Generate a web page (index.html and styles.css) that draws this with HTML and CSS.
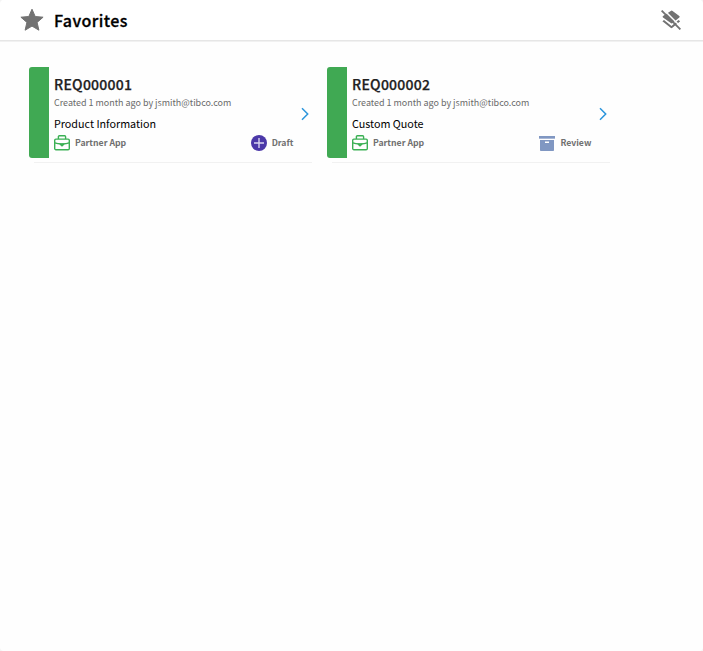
FILE: index.html
```html
<!DOCTYPE html>
<html lang="en">
<head>
<meta charset="utf-8">
<title>Favorites</title>
<link rel="stylesheet" href="styles.css">
</head>
<body>
<svg class="defs" aria-hidden="true">
  <symbol id="case" viewBox="0 0 16 16">
    <g fill="none" stroke="#3bb054" stroke-width="1.400" stroke-linejoin="round">
      <rect x=".7" y="4.1" width="14.6" height="10.600" rx="1.200"/>
      <path d="M4.400 4V1.800c0-.6.4-1 1-1h5.200c.6 0 1 .4 1 1V4M.8 7.900c2 .9 4.400 1.100 7.200 1.100s5.200-.2 7.200-1.100"/>
    </g>
    <path fill="#3bb054" d="M5.700 8.500h4.600v1.300L8 11.800 5.700 9.800z"/>
  </symbol>
  <symbol id="chevron" viewBox="0 0 8 14">
    <path d="M1 1.200 6.700 7 1 12.800" fill="none" stroke="#2d96dc" stroke-width="1.500"/>
  </symbol>
</svg>
<main class="panel">
  <header class="header">
    <svg class="star" viewBox="0 0 24 24"><path fill="#727272" stroke="#727272" stroke-linejoin="round" d="m12 1.200 3.200 7.300 7.900.7-6 5.200 1.800 7.800L12 18.100l-6.900 4.100 1.800-7.800-6-5.200 7.900-.7z"/></svg>
    <h1 class="heading">Favorites</h1>
    <svg class="layers" viewBox="0 0 20 20">
      <g fill="#727272">
        <path d="M9.800.9q.9-.7 1.800 0l6.700 5.200q.9.700 0 1.400l-6.700 5.600q-.9.700-1.800 0L2 7.500q-.9-.7 0-1.400z"/>
        <path d="m1.400 11.300 1.600-1.200 7.500 5.800 7-5.800 1.700 1.200-7.800 6.500q-.9.700-1.800 0z"/>
      </g>
      <path d="m2-1 19.500 19.500" stroke="#fff" stroke-width="1.500"/>
      <path d="m.6.600 18.800 18.800" stroke="#727272" stroke-width="1.900"/>
    </svg>
  </header>
  <section class="cards">
    <article class="card">
      <div class="stripe"></div>
      <div class="body">
        <h2 class="id">REQ000001</h2>
        <p class="meta">Created 1 month ago by jsmith@tibco.com</p>
        <p class="summary">Product Information</p>
        <div class="footer">
          <svg class="icon"><use href="#case"/></svg>
          <span class="label app">Partner App</span>
          <svg class="icon" viewBox="0 0 16 16"><circle cx="8" cy="8" r="8" fill="#4b38a8"/><path d="M8 3v10M3 8h10" stroke="#d9d5f0" stroke-width="1.400"/></svg>
          <span class="label">Draft</span>
        </div>
      </div>
      <svg class="chevron"><use href="#chevron"/></svg>
    </article>
    <article class="card">
      <div class="stripe"></div>
      <div class="body">
        <h2 class="id">REQ000002</h2>
        <p class="meta">Created 1 month ago by jsmith@tibco.com</p>
        <p class="summary">Custom Quote</p>
        <div class="footer">
          <svg class="icon"><use href="#case"/></svg>
          <span class="label app">Partner App</span>
          <svg class="icon" viewBox="0 0 16 16"><path fill="#8097c2" d="M0 1h16v3H0zM1 5h14v10.200c0 .5-.3.800-.8.800H1.800c-.5 0-.8-.3-.8-.8z"/><path d="M0 3.500h16" stroke="#a9b8d6"/><path d="M6 7.300h4" stroke="#fff" stroke-width="1.500"/></svg>
          <span class="label">Review</span>
        </div>
      </div>
      <svg class="chevron"><use href="#chevron"/></svg>
    </article>
  </section>
</main>
</body>
</html>
```
FILE: styles.css
```css
* { box-sizing: border-box; }
body {
  margin: 0;
  background: #f4f4f4;
  font-family: "Noto Sans CJK SC", "Noto Sans", sans-serif;
}
h1, h2, p { margin: 0; white-space: nowrap; }
.defs { display: none; }
.panel {
  height: 651px;
  background: #fefefe;
  border-radius: 4px;
  overflow: hidden;
}
.header {
  display: flex;
  align-items: center;
  height: 41px;
  margin-bottom: 1px;
  padding: 0 22px 0 20px;
  background: #fff;
  border-bottom: 1px solid #e6e6e6;
  box-shadow: 0 1px 0 #f1f1f1;
}
.star { width: 24px; height: 24px; }
.heading {
  flex: 1;
  margin-left: 10px;
  padding-bottom: 1px;
  font-size: 16px;
  line-height: 24px;
  font-weight: 500;
  letter-spacing: .42px;
  -webkit-text-stroke: .3px #000;
  color: #000;
}
.layers { width: 20px; height: 20px; margin-bottom: 1px; }
.cards { display: flex; gap: 15px; padding: 25px 29px; }
.card {
  display: flex;
  width: 283px;
  height: 96px;
  background: linear-gradient(#f1f1f1, #f1f1f1) 5px 95px / 278px 1px no-repeat;
}
.stripe { width: 20px; height: 91px; background: #40a953; border-radius: 3px 0 0 3px; }
.body { width: 240px; padding: 7px 0 0 5px; }
.id { font-size: 14px; line-height: 20px; font-weight: 500; letter-spacing: .25px; -webkit-text-stroke: .25px #212121; color: #212121; }
.meta { margin-top: 1px; font-size: 8.960px; line-height: 16px; color: #6a6a6a; }
.summary { margin-top: 3px; font-size: 10.750px; line-height: 20px; color: #000; }
.footer { display: flex; align-items: center; height: 18px; }
.icon { width: 16px; height: 16px; }
.label { margin-left: 5px; font-size: 8.700px; line-height: 16px; font-weight: 700; color: #707070; }
.app { margin-right: auto; }
.footer .label:last-child { margin-right: -4.400px; }
.chevron { width: 8px; height: 14px; margin: 40px 0 0 12px; }
```
